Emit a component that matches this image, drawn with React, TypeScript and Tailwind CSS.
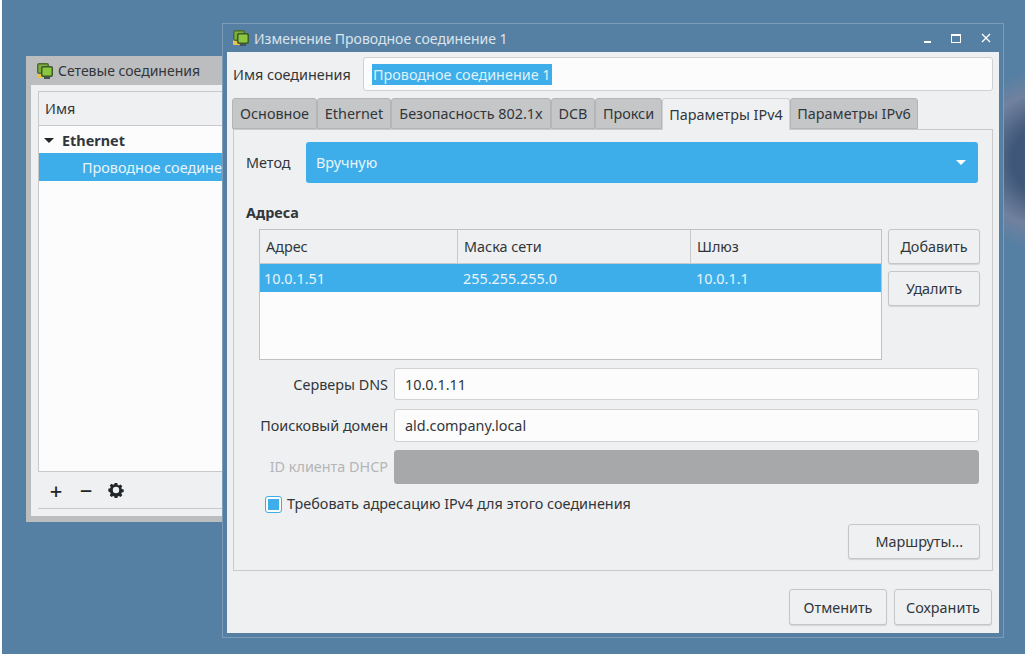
const font = "font-['Noto_Sans',sans-serif]";

const NetIcon = () => (
  <svg width="18" height="18" viewBox="0 0 18 18" className="shrink-0">
    <rect x="1" y="9" width="7" height="7" rx="1" fill="#e3c44e" />
    <rect x="1" y="1" width="12" height="11" rx="2" fill="#4d6b33" />
    <rect x="2.5" y="2.5" width="9" height="8" fill="#7fae3c" />
    <rect x="5" y="4" width="12" height="11" rx="2" fill="#3c5a2c" />
    <rect x="6.5" y="5.5" width="9" height="8" rx="1" fill="#8cc63f" />
    <rect x="8" y="15" width="6" height="2" fill="#44525c" />
  </svg>
);

const GearIcon = () => (
  <svg width="16" height="16" viewBox="0 0 16 16">
    <path
      fill="#232629"
      fillRule="evenodd"
      d="M6.7 1h2.6l.4 1.9 1.2.5 1.6-1 1.8 1.8-1 1.6.5 1.2 1.9.4v2.6l-1.9.4-.5 1.2 1 1.6-1.8 1.8-1.6-1-1.2.5-.4 1.9H6.7l-.4-1.9-1.2-.5-1.6 1-1.8-1.8 1-1.6-.5-1.2L.3 9.3V6.7l1.9-.4.5-1.2-1-1.6 1.8-1.8 1.6 1 1.2-.5zM8 4.8a3.2 3.2 0 1 0 0 6.4 3.2 3.2 0 0 0 0-6.4z"
    />
  </svg>
);

const tabs = [
  { label: "Основное", w: "w-[85px]" },
  { label: "Ethernet", w: "w-[74px]" },
  { label: "Безопасность 802.1x", w: "w-[160px]" },
  { label: "DCB", w: "w-[44px]" },
  { label: "Прокси", w: "w-[67px]" },
  { label: "Параметры IPv4", w: "w-[128px]", active: true },
  { label: "Параметры IPv6", w: "w-[128px]" },
];

const Btn = ({ children, className }: { children: React.ReactNode; className: string }) => (
  <button className={`flex items-center justify-center rounded-[3px] border border-[#c4c6c8] bg-[#eff0f1] pt-[1px] text-[14.4px] text-[#31363b] shadow-[0_1px_1px_rgba(0,0,0,0.12)] ${className}`}>
    {children}
  </button>
);

const Field = ({ label, value, disabled, className, textClass }: { label: string; value?: string; disabled?: boolean; className: string; textClass?: string }) => (
  <div className={`flex items-center ${className}`}>
    <span className={`w-[148px] whitespace-nowrap pr-[6px] text-right text-[14.4px] ${textClass ?? ""} ${disabled ? "text-[#b4b6b8]" : "text-[#31363b]"}`}>{label}</span>
    <div className={`flex h-full w-[585px] items-center rounded-[3px] border px-[10px] text-[14.4px] text-[#31363b] ${textClass ?? ""} ${disabled ? "border-[#a7a8a9] bg-[#a7a8a9]" : "border-[#cfd1d3] bg-[#fcfcfc]"}`}>
      {value}
    </div>
  </div>
);

const BackWindow = () => (
  <div className="absolute left-[26px] top-[56px] flex h-[466px] w-[198px] flex-col overflow-hidden bg-[#bcbdbe] pl-[5px] pb-[6px]">
    <div className="flex h-[29px] shrink-0 items-center gap-[4px] pl-[5px] text-[14px] text-[#31363b]">
      <NetIcon />
      <span className="whitespace-nowrap">Сетевые соединения</span>
    </div>
    <div className="flex min-h-0 flex-1 flex-col bg-[#eff0f1] pl-[7px] pt-[6px]">
      <div className="flex h-[381px] flex-col border border-r-0 border-[#c8c9cb] bg-[#fcfcfc]">
        <div className="flex h-[34px] shrink-0 items-center border-b border-[#c8c9cb] bg-[#eff0f1] pl-[6px] pt-[1px] text-[14.4px] text-[#31363b]">Имя</div>
        <div className="flex h-[27px] shrink-0 items-center pt-[2px] pl-[5px] text-[14.4px] font-bold text-[#31363b]">
          <span className="mr-[8px] h-0 w-0 border-x-[5px] border-t-[5px] border-x-transparent border-t-[#232629]" />
          Ethernet
        </div>
        <div className="flex h-[28px] shrink-0 items-center whitespace-nowrap bg-[#3daee9] pl-[43px] pt-[1px] text-[14.4px] text-[#e8f4fb]">Проводное соедине</div>
      </div>
      <div className="flex h-[37px] shrink-0 items-center gap-[14px] border-b border-[#c8c9cb] pl-[10px]">
        <span className="flex w-[16px] justify-center text-[22px] leading-none font-medium text-[#232629]">+</span>
        <span className="flex w-[16px] justify-center text-[22px] leading-none font-medium text-[#232629]">−</span>
        <GearIcon />
      </div>
    </div>
  </div>
);

const FrontWindow = () => (
  <div className="absolute left-[222px] top-[23px] flex h-[615px] w-[782px] flex-col border border-[#7c9db9] bg-[#5580a3] px-[4px] pb-[4px]">
    <div className="flex h-[28px] shrink-0 items-center gap-[4px] pl-[5px] text-[14px] text-[#dbe4ec]">
      <NetIcon />
      <span>Изменение Проводное соединение 1</span>
      <div className="ml-auto flex items-center text-white">
        <span className="mr-[20px] mt-[8px] h-[2px] w-[7px] bg-white" />
        <span className="mr-[20px] h-[9px] w-[10px] border border-t-2 border-white" />
        <svg width="10" height="10" viewBox="0 0 10 10" className="mr-[8px]">
          <path d="M1 1l8 8M9 1l-8 8" stroke="#fff" strokeWidth="1.3" />
        </svg>
      </div>
    </div>
    <div className="flex min-h-0 flex-1 flex-col bg-[#eff0f1] px-[6px] pt-[5px]">
      <div className="flex h-[34px] shrink-0 items-center">
        <span className="w-[130px] whitespace-nowrap pt-[1px] text-[14.4px] text-[#31363b]">Имя соединения</span>
        <div className="flex h-full flex-1 items-center rounded-[3px] border border-[#cfd1d3] bg-[#fcfcfc] pl-[8px] pt-[1px] text-[14.4px]">
          <span className="bg-[#3daee9] pl-[1px] pr-[1px] text-[#dff1fb]">Проводное соединение 1</span>
        </div>
      </div>
      <div className="mt-[7px] -ml-[1px] flex h-[31px] shrink-0 items-stretch">
        {tabs.map((t) => (
          <div
            key={t.label}
            className={`${t.w} flex items-center justify-center whitespace-nowrap rounded-t-[3px] border border-[#b4b5b7] pt-[1px] text-[14.4px] text-[#31363b] ${
              t.active ? "relative z-10 -mb-[1px] border-[#cfd1d3] border-b-0 bg-[#eff0f1]" : "bg-[#c5c6c8]"
            }`}
          >
            {t.label}
          </div>
        ))}
      </div>
      <div className="flex h-[442px] shrink-0 flex-col border border-[#c8c9cb] px-[12px] pt-[12px]">
        <div className="flex h-[41px] shrink-0 items-center">
          <span className="w-[60px] pt-[1px] text-[14.4px] text-[#31363b]">Метод</span>
          <div className="flex h-full w-[672px] items-center justify-between rounded-[3px] bg-[#3daee9] pl-[10px] pr-[12px] text-[14.4px] text-[#e8f4fb]">
            Вручную
            <span className="h-0 w-0 border-x-[5px] border-t-[5px] border-x-transparent border-t-white" />
          </div>
        </div>
        <div className="mt-[20px] text-[14.4px] leading-[20px] font-bold text-[#31363b]">Адреса</div>
        <div className="mt-[6px] flex shrink-0 pl-[13px]">
          <div className="flex h-[131px] w-[623px] flex-col border border-[#c0c1c3] bg-[#fcfcfc]">
            <div className="flex h-[34px] shrink-0 border-b border-[#c8c9cb] bg-[#eff0f1] text-[14.4px] text-[#31363b]">
              <div className="flex w-[198px] items-center border-r border-[#c8c9cb] pl-[6px]">Адрес</div>
              <div className="flex w-[233px] items-center border-r border-[#c8c9cb] pl-[6px]">Маска сети</div>
              <div className="flex flex-1 items-center pl-[6px]">Шлюз</div>
            </div>
            <div className="flex h-[28px] shrink-0 items-center bg-[#3daee9] pt-[1px] text-[14.4px] text-[#e8f4fb]">
              <div className="w-[198px] pl-[4px]">10.0.1.51</div>
              <div className="w-[233px] pl-[5px]">255.255.255.0</div>
              <div className="pl-[5px]">10.0.1.1</div>
            </div>
          </div>
          <div className="ml-[6px] flex flex-col gap-[7px]">
            <Btn className="h-[35px] w-[92px]">Добавить</Btn>
            <Btn className="h-[35px] w-[92px]">Удалить</Btn>
          </div>
        </div>
        <Field className="mt-[8px] h-[32px]" textClass="pt-[1px]" label="Серверы DNS" value="10.0.1.11" />
        <Field className="mt-[9px] h-[33px]" label="Поисковый домен" value="ald.company.local" />
        <Field className="mt-[8px] h-[34px]" label="ID клиента DHCP" disabled />
        <div className="mt-[11px] flex h-[18px] items-center pl-[19px] text-[14.4px] text-[#31363b]">
          <span className="mr-[5px] flex h-[17px] w-[17px] items-center justify-center rounded-[3px] border border-[#3daee9] bg-[#fcfcfc]">
            <span className="h-[11px] w-[11px] bg-[#3daee9]" />
          </span>
          Требовать адресацию IPv4 для этого соединения
        </div>
        <div className="mt-[11px] flex justify-end">
          <Btn className="h-[35px] w-[132px] !justify-end pr-[16px]">Маршруты...</Btn>
        </div>
      </div>
      <div className="mt-[18px] flex justify-end gap-[7px] pr-[1px]">
        <Btn className="h-[36px] w-[98px]">Отменить</Btn>
        <Btn className="h-[36px] w-[98px]">Сохранить</Btn>
      </div>
    </div>
  </div>
);

export default function App() {
  return (
    <div className={`h-[656px] w-[1025px] overflow-hidden bg-white pb-[2px] pl-[2px] ${font}`}>
      <div className="relative h-full w-full overflow-hidden bg-[#5580a3] bg-[radial-gradient(circle_at_1045px_160px,#3f5779_0,#3f5779_35px,#71819f_68px,transparent_92px)]">
        <div className="relative -left-[2px] h-full">
          <BackWindow />
          <FrontWindow />
        </div>
      </div>
    </div>
  );
}
